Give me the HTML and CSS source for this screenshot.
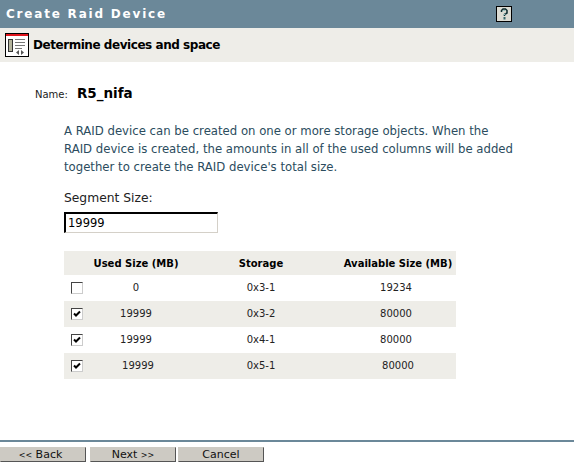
FILE: index.html
```html
<!DOCTYPE html>
<html lang="en">
<head>
    <meta charset="UTF-8">
    <title>Create Raid Device</title>
    <link rel="stylesheet" href="styles.css">
</head>
<body>
    <div class="page">
        <div class="title-bar">
            <h1>Create Raid Device</h1>
            <span class="help">
                <svg width="14" height="14" viewBox="0 0 14 14">
                    <path d="M4.500 5V3.500L6 2H8.500L10 3.500V6L7.500 7.500V9" fill="none" stroke="#0b2a2e" stroke-width="1.500"/>
                    <path d="M5.500 4.500L6.500 3.500H8M8.500 7L6.500 8" fill="none" stroke="#8fc4c4" stroke-width="1"/>
                    <rect x="6.500" y="10" width="2" height="2.500" fill="#37686c"/>
                </svg>
            </span>
        </div>
        <div class="step-bar">
            <span class="step-icon">
                <svg width="24" height="24" viewBox="0 0 24 24">
                    <rect x="0.500" y="0.500" width="23" height="23" fill="#fff" stroke="#000"/>
                    <rect x="1" y="1" width="22" height="2" fill="#e0141c"/>
                    <rect x="3.500" y="6.500" width="4" height="12" fill="#b4b49c" stroke="#333"/>
                    <path d="M10 6.500H20M10 9.500H20M10 12.500H20M10 15.500H17" stroke="#777" stroke-width="1"/>
                    <path d="M14 17V22L11 19.500ZM16 17V22L19 19.500Z" fill="#555"/>
                </svg>
            </span>
            <h2>Determine devices and space</h2>
        </div>

        <div class="content">
            <div class="name-row">
                <span class="name-label">Name:</span>
                <span class="name-value">R5_nifa</span>
            </div>
            <p class="intro">A RAID device can be created on one or more storage objects. When the RAID device is created, the amounts in all of the used columns will be added together to create the RAID device's total size.</p>
            <label class="seg-label" for="segSize">Segment Size:</label>
            <input class="seg-input" type="text" id="segSize" value="19999">

            <table class="devices">
                <tr>
                    <th class="col-check"></th>
                    <th class="col-used">Used Size (MB)</th>
                    <th class="col-storage">Storage</th>
                    <th class="col-avail">Available Size (MB)</th>
                </tr>
                <tr>
                    <td><span class="check"></span></td>
                    <td>0</td>
                    <td>0x3-1</td>
                    <td>19234</td>
                </tr>
                <tr class="alt">
                    <td><span class="check"><svg width="10" height="10" viewBox="0 0 10 10"><path d="M2 4.500L4 6.500L8 2.500" fill="none" stroke="#000" stroke-width="2"/></svg></span></td>
                    <td>19999</td>
                    <td>0x3-2</td>
                    <td>80000</td>
                </tr>
                <tr>
                    <td><span class="check"><svg width="10" height="10" viewBox="0 0 10 10"><path d="M2 4.500L4 6.500L8 2.500" fill="none" stroke="#000" stroke-width="2"/></svg></span></td>
                    <td>19999</td>
                    <td>0x4-1</td>
                    <td>80000</td>
                </tr>
                <tr class="alt">
                    <td><span class="check"><svg width="10" height="10" viewBox="0 0 10 10"><path d="M2 4.500L4 6.500L8 2.500" fill="none" stroke="#000" stroke-width="2"/></svg></span></td>
                    <td class="nudge">19999</td>
                    <td>0x5-1</td>
                    <td class="nudge">80000</td>
                </tr>
            </table>
        </div>

        <div class="footer">
            <button type="button" class="back"><span class="arrows">&lt;&lt;</span> Back</button>
            <button type="button">Next <span class="arrows">&gt;&gt;</span></button>
            <button type="button">Cancel</button>
        </div>
    </div>
</body>
</html>
```

FILE: styles.css
```css
html, body {
    margin: 0;
    height: 100%;
}
body {
    font-family: "DejaVu Sans", Verdana, sans-serif;
    font-size: 11px;
    color: #000;
    background-color: #fff;
}
.page {
    height: 463px;
    display: flex;
    flex-direction: column;
    overflow: hidden;
}
.title-bar {
    height: 28px;
    background-color: #6b8899;
    display: flex;
    align-items: center;
    justify-content: space-between;
    padding: 0 62px 0 6px;
}
h1 {
    margin: 0;
    font-size: 12px;
    font-weight: bold;
    letter-spacing: 1.8px;
    color: #fff;
}
.help {
    width: 14px;
    height: 14px;
    border: 1px solid #000;
    background-color: #dcdcd4;
    display: flex;
}
.step-bar {
    height: 34px;
    background-color: #eeede8;
    display: flex;
    align-items: center;
    padding-left: 5px;
    gap: 4px;
}
.step-icon {
    display: flex;
}
h2 {
    margin: 0;
    font-size: 12px;
    font-weight: bold;
    letter-spacing: -0.45px;
}
.content {
    flex: 1;
    padding: 23px 0 0 64px;
}
.name-row {
    display: flex;
    align-items: baseline;
    margin-left: -29px;
    gap: 9px;
}
.name-label {
    font-size: 10px;
    color: #222;
}
.name-value {
    font-size: 13.5px;
    font-weight: bold;
}
.intro {
    width: 450px;
    margin: 21px 0 0;
    font-size: 11.7px;
    line-height: 18px;
    color: #2b4c5e;
}
.seg-label {
    display: block;
    margin-top: 13px;
    font-size: 12.3px;
    line-height: 18px;
    color: #222;
}
.seg-input {
    display: block;
    box-sizing: border-box;
    width: 154px;
    height: 21px;
    margin-top: 5px;
    padding: 0 2px;
    font-family: inherit;
    font-size: 11.5px;
    border: 1px solid;
    border-color: #000 #d4d0c8 #d4d0c8 #000;
    border-top-width: 2px;
    border-left-width: 2px;
    outline: none;
}
.devices {
    width: 392px;
    margin-top: 18px;
    border-collapse: collapse;
    table-layout: fixed;
}
.devices th {
    height: 24px;
    padding: 0;
    font-size: 10px;
    background-color: #eeede8;
}
.devices th.col-avail {
    padding-left: 4px;
}
.devices td {
    height: 24px;
    padding: 0 0 2px;
    text-align: center;
    font-size: 10px;
    color: #222;
}
.devices tr.alt td {
    background-color: #eeede8;
}
.devices td.nudge {
    padding-left: 4px;
}
.col-check { width: 22px; }
.col-used { width: 100px; }
.col-storage { width: 150px; }
.col-avail { width: 116px; }
.devices td:first-child {
    text-align: left;
    padding: 0 0 0 7px;
    height: 26px;
}
.check {
    display: block;
    box-sizing: border-box;
    width: 12px;
    height: 12px;
    background-color: #fff;
    border: 1px solid;
    border-color: #444 #ccc #ccc #444;
}
.check svg {
    display: block;
}
.footer {
    border-top: 2px solid #6b8899;
    padding-top: 5px;
    height: 16px;
    display: flex;
    gap: 2px;
}
.footer button {
    width: 86px;
    height: 15px;
    padding: 0;
    font-family: inherit;
    font-size: 11px;
    line-height: 13px;
    color: #111;
    background-color: #cdcac3;
    border: 1px solid;
    border-color: #cdcac3 #555 #555 #cdcac3;
}
.footer button.back {
    margin-right: 2px;
    padding-right: 5px;
}
.arrows {
    font-size: 8px;
}
```
